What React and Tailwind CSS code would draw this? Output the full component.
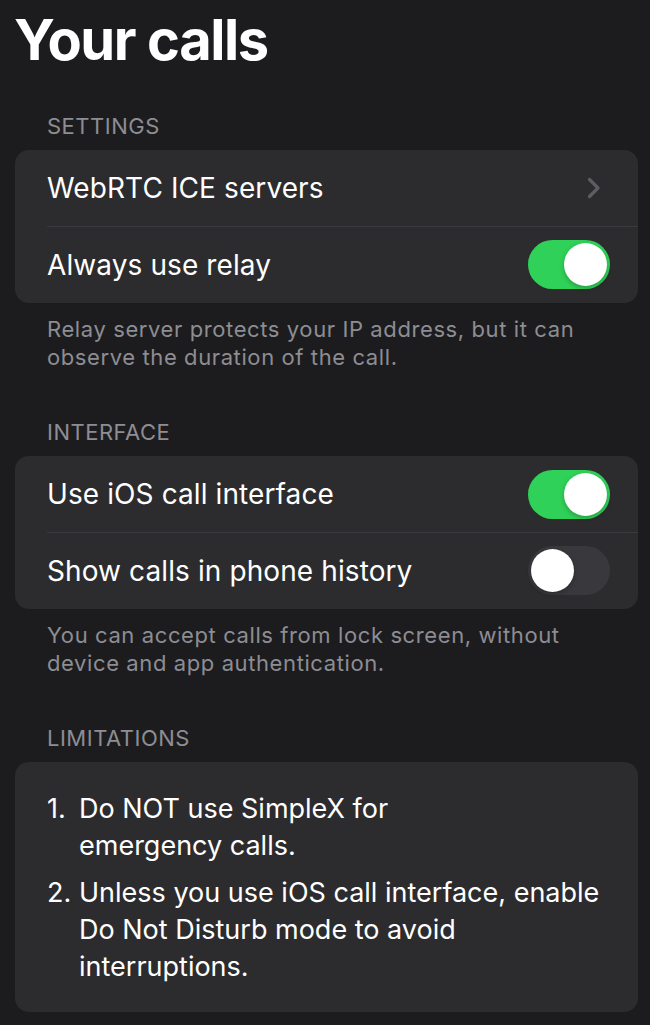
import React, { useState } from 'react';

function Toggle({ on, onChange }) {
  return (
    <button
      onClick={onChange}
      className={`relative flex h-[49px] w-[82px] shrink-0 items-center rounded-full p-[3px] ${
        on ? 'justify-end bg-[#30d158]' : 'justify-start bg-[#39393d]'
      }`}
    >
      <span className="block h-[43px] w-[43px] rounded-full bg-white shadow-[0_2px_5px_rgba(0,0,0,0.25)]" />
    </button>
  );
}

function Chevron() {
  return (
    <svg width="14" height="22" viewBox="0 0 14 22" fill="none" className="mr-[9px]">
      <path d="M2.5 2.5 L11 11 L2.5 19.5" stroke="#5d5d62" strokeWidth="3.2" strokeLinecap="round" strokeLinejoin="round" />
    </svg>
  );
}

function SectionHeader({ children }) {
  return (
    <div className="px-[47px] pb-[10px] text-[22px] leading-[28px] tracking-[0.5px] text-[#8d8d93] uppercase">
      {children}
    </div>
  );
}

function Footnote({ children }) {
  return (
    <div className="px-[47px] pt-[12px] text-[22px] leading-[28px] tracking-[0.6px] text-[#8d8d93]">
      {children}
    </div>
  );
}

function Row({ label, right, divider }) {
  return (
    <div className="relative flex h-[76.5px] items-center justify-between pl-[32px] pr-[28px]">
      <span className="text-[28px] tracking-[0.1px] text-white">{label}</span>
      {right}
      {divider && <div className="absolute bottom-0 left-[32px] right-0 h-px bg-[#3a3a3e]" />}
    </div>
  );
}

export default function App() {
  const [relay, setRelay] = useState(true);
  const [iosCalls, setIosCalls] = useState(true);
  const [history, setHistory] = useState(false);

  return (
    <div
      className="min-h-screen bg-[#1c1c1e] pb-[14px]"
      style={{ fontFamily: 'Inter, "Noto Sans", sans-serif' }}
    >
      {/* Title */}
      <h1 className="px-[14px] pt-[10px] text-[56px] font-bold leading-[60px] tracking-[-1.4px] text-white">
        Your calls
      </h1>

      {/* Settings */}
      <div className="mt-[42px]">
        <SectionHeader>Settings</SectionHeader>
        <div className="ml-[15px] mr-[12px] overflow-hidden rounded-[14px] bg-[#2c2c2e]">
          <Row label="WebRTC ICE servers" right={<Chevron />} divider />
          <Row label="Always use relay" right={<Toggle on={relay} onChange={() => setRelay(!relay)} />} />
        </div>
        <Footnote>
          Relay server protects your IP address, but it can
          <br />
          observe the duration of the call.
        </Footnote>
      </div>

      {/* Interface */}
      <div className="mt-[47px]">
        <SectionHeader>Interface</SectionHeader>
        <div className="ml-[15px] mr-[12px] overflow-hidden rounded-[14px] bg-[#2c2c2e]">
          <Row label="Use iOS call interface" right={<Toggle on={iosCalls} onChange={() => setIosCalls(!iosCalls)} />} divider />
          <Row label="Show calls in phone history" right={<Toggle on={history} onChange={() => setHistory(!history)} />} />
        </div>
        <Footnote>
          You can accept calls from lock screen, without
          <br />
          device and app authentication.
        </Footnote>
      </div>

      {/* Limitations */}
      <div className="mt-[47px]">
        <SectionHeader>Limitations</SectionHeader>
        <div className="ml-[15px] mr-[12px] rounded-[14px] bg-[#2c2c2e] px-[32px] pb-[27px] pt-[28px]">
          <ol className="flex flex-col gap-[10px] text-[27px] leading-[37px] text-white">
            <li className="flex">
              <span className="w-[32px] shrink-0">1.</span>
              <span className="whitespace-nowrap">
                Do NOT use SimpleX for
                <br />
                emergency calls.
              </span>
            </li>
            <li className="flex">
              <span className="w-[32px] shrink-0">2.</span>
              <span className="whitespace-nowrap">
                Unless you use iOS call interface, enable
                <br />
                Do Not Disturb mode to avoid
                <br />
                interruptions.
              </span>
            </li>
          </ol>
        </div>
      </div>
    </div>
  );
}
